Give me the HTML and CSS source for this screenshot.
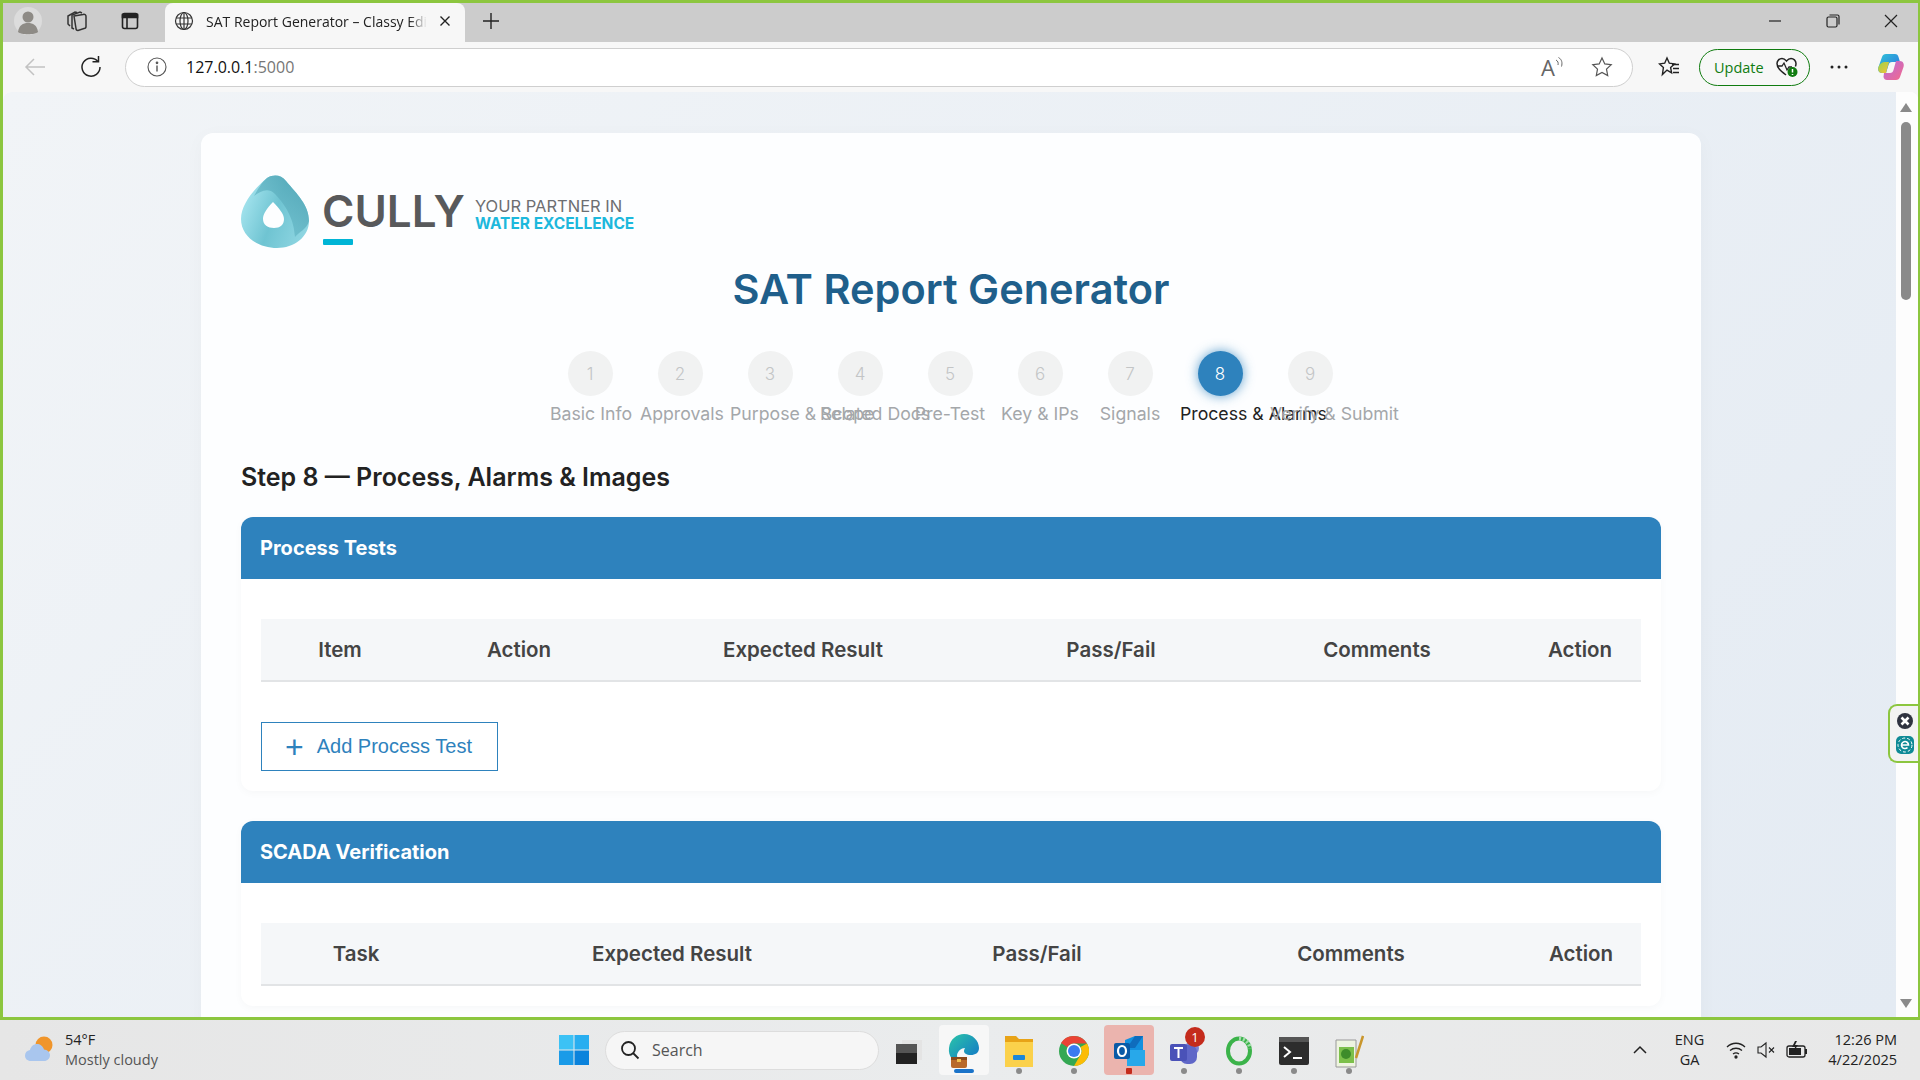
FILE: index.html
```html
<!DOCTYPE html>
<html lang="en">
<head>
  <meta charset="UTF-8">
  <title>SAT Report Generator – Classy Edition</title>
  <link rel="stylesheet" href="styles.css">
</head>
<body>
  <div class="window">
    <div class="tabstrip">
      <span class="strip-btn profile">
        <svg width="30" height="30" viewBox="0 0 30 30"><circle cx="15" cy="15" r="14" fill="#dcdcdc"/><circle cx="15" cy="11" r="5.5" fill="#8e8b86"/><path d="M5 26c1-7 5-9 10-9s9 2 10 9c-3 3-17 3-20 0z" fill="#8e8b86"/></svg>
      </span>
      <span class="strip-btn collections">
        <svg width="24" height="24" viewBox="0 0 24 24" fill="none" stroke="#333" stroke-width="1.5"><path d="M9 7l9-1.500a2 2 0 0 1 3 2v10a2 2 0 0 1-2 2l-6 2a2 2 0 0 1-2-2z"/><path d="M9 20l-2-1V6l8-3 2 1"/><path d="M5 17l-2-2V7l7-4 2 .5"/></svg>
      </span>
      <span class="strip-btn tabactions">
        <svg width="20" height="20" viewBox="0 0 20 20" fill="none" stroke="#222" stroke-width="1.6"><rect x="2.500" y="2.500" width="15" height="15" rx="2"/><path d="M2.500 3.500h15v3h-15z" fill="#222"/><path d="M7 6.500v11"/></svg>
      </span>
      <div class="tab">
        <svg width="20" height="20" viewBox="0 0 20 20" fill="none" stroke="#333" stroke-width="1.200"><circle cx="10" cy="10" r="8.500"/><ellipse cx="10" cy="10" rx="4" ry="8.500"/><path d="M2 7h16M2 13h16M10 1.500v17"/></svg>
        <span class="tab-title">SAT Report Generator – Classy Edition</span>
        <svg class="tab-close" width="12" height="12" viewBox="0 0 12 12" stroke="#222" stroke-width="1.400"><path d="M1.500 1.500l9 9M10.500 1.500l-9 9"/></svg>
      </div>
      <span class="strip-btn newtab">
        <svg width="18" height="18" viewBox="0 0 18 18" stroke="#222" stroke-width="1.400"><path d="M9 1v16M1 9h16"/></svg>
      </span>
      <div class="win-controls">
        <svg width="14" height="14" viewBox="0 0 14 14" stroke="#222" stroke-width="1.200"><path d="M1 7h12"/></svg>
        <svg width="14" height="14" viewBox="0 0 14 14" fill="none" stroke="#222" stroke-width="1.200"><rect x="1" y="3" width="10" height="10" rx="1.500"/><path d="M3.500 1h8a1.500 1.500 0 0 1 1.500 1.500v8"/></svg>
        <svg width="14" height="14" viewBox="0 0 14 14" stroke="#222" stroke-width="1.200"><path d="M1 1l12 12M13 1L1 13"/></svg>
      </div>
    </div>

    <div class="toolbar">
      <span class="tool-btn back">
        <svg width="22" height="20" viewBox="0 0 22 20" fill="none" stroke="#c2c2c2" stroke-width="1.500"><path d="M21 10H2M10 2l-8 8 8 8"/></svg>
      </span>
      <span class="tool-btn reload">
        <svg width="22" height="22" viewBox="0 0 22 22" fill="none" stroke="#222" stroke-width="1.500"><path d="M18 5.500A9 9 0 1 0 20 11"/><path d="M12.500 5.800h6V0"/></svg>
      </span>
      <div class="addressbar">
        <svg width="20" height="20" viewBox="0 0 20 20" fill="none" stroke="#555" stroke-width="1.100"><circle cx="10" cy="10" r="9"/><path d="M10 8.500v6" stroke-width="1.400"/><circle cx="10" cy="5.800" r=".8" fill="#555"/></svg>
        <span class="url">127.0.0.1<span class="url-port">:5000</span></span>
        <span class="readaloud">
          <span class="readaloud-a">A</span>
          <svg width="10" height="14" viewBox="0 0 10 14" fill="none" stroke="#666" stroke-width="1"><path d="M1 5c2 1 2.500 3 2 5M3.500 2.500c3.500 2 4 5.500 3 9"/></svg>
        </span>
        <svg class="addr-star" width="22" height="22" viewBox="0 0 22 22" fill="none" stroke="#555" stroke-width="1.200"><path d="M11 2l2.800 5.900 6.400.8-4.700 4.400 1.200 6.400-5.700-3.100-5.700 3.100 1.200-6.400L1.800 8.700l6.400-.8z"/></svg>
      </div>
      <span class="tool-btn favorites">
        <svg width="22" height="22" viewBox="0 0 22 22" fill="none" stroke="#222" stroke-width="1.400"><path d="M9 2l2.300 5.200 5.200.7-3.900 3.600 1 5.300-4.600-2.700-4.600 4.400 1-7-3.900-3.600 5.200-.7z"/><path d="M14 8.500h7M15 12.500h6M15 16.500h6"/></svg>
      </span>
      <div class="update-pill">
        <span>Update</span>
        <svg width="24" height="22" viewBox="0 0 24 22" fill="none"><path d="M11 19C6 15 2 12 2 7.500 2 4.500 4.500 2.500 7 2.500c2 0 3.200 1 4.500 2.500C12.800 3.500 14 2.500 16 2.500c2.500 0 5 2 5 5 0 1-.2 2-.6 3" stroke="#222" stroke-width="1.500"/><path d="M3 10h4l2 -3 3 7 2-3h3" stroke="#222" stroke-width="1.300"/><circle cx="17.500" cy="16" r="5" fill="#107c10"/><path d="M17.500 13v3.500M17.500 18v1" stroke="#fff" stroke-width="1.500"/></svg>
      </div>
      <span class="tool-btn more">
        <svg width="18" height="4" viewBox="0 0 18 4" fill="#222"><circle cx="2" cy="2" r="1.500"/><circle cx="9" cy="2" r="1.500"/><circle cx="16" cy="2" r="1.500"/></svg>
      </span>
      <span class="tool-btn copilot">
        <svg width="28" height="28" viewBox="0 0 28 28">
          <defs>
            <linearGradient id="cpA" x1="0" y1="0" x2="1" y2="1"><stop offset="0" stop-color="#2fc4d8"/><stop offset="1" stop-color="#2d6fe0"/></linearGradient>
            <linearGradient id="cpB" x1="0" y1="0" x2="1" y2="1"><stop offset="0" stop-color="#9bd24a"/><stop offset="1" stop-color="#f5c33b"/></linearGradient>
            <linearGradient id="cpC" x1="0" y1="0" x2="1" y2="1"><stop offset="0" stop-color="#b46be0"/><stop offset="1" stop-color="#f56a8a"/></linearGradient>
          </defs>
          <path d="M9 1h9c2 0 3 1 3.500 3L23 9h-8c-2 0-3 1-3.500 3L9 20H5c-3 0-4.500-3-3.500-6L5 4c.6-2 2-3 4-3z" fill="url(#cpA)"/>
          <path d="M1.500 14C3 10 6 9 8 9h4l-3 11H5c-3 0-4.500-3-3.500-6z" fill="url(#cpB)"/>
          <path d="M19 8h4c3 0 4.500 3 3.500 6L23 24c-.6 2-2 3-4 3h-9c-2 0-3-1-3.500-3L7 20h6c2 0 3-1 3.500-3z" fill="url(#cpC)"/>
        </svg>
      </span>
    </div>

    <div class="viewport">
      <div class="page">
        <main class="card">
          <div class="logo">
            <svg class="logo-drop" width="68" height="73" viewBox="0 0 68 73">
              <defs>
                <linearGradient id="dropA" x1="0" y1="0.300" x2="1" y2="0.700"><stop offset="0" stop-color="#a8e6f0"/><stop offset="0.500" stop-color="#6fc4d2"/><stop offset="1" stop-color="#8fd6e2"/></linearGradient>
                <linearGradient id="dropB" x1="1" y1="0" x2="0" y2="1"><stop offset="0" stop-color="#4a9fb0"/><stop offset="1" stop-color="#7ccbd8"/></linearGradient>
              </defs>
              <path fill="url(#dropA)" fill-rule="evenodd" d="M26 3C33 -1 40 0 45 6C56 19 68 30 68 46C68 62 53 73 36 73C18 73 0 62 0 44C0 29 14 13 26 3ZM32 27C26 33 22 39 22 44C22 50 27 53 33 53C39 53 43 50 43 44C43 39 38 33 32 27Z"/>
              <path fill="url(#dropB)" opacity="0.850" d="M26 3C33 -1 40 0 45 6C56 19 68 30 68 46C66 54 58 57 54 62C53 50 50 36 34 19C27 12 20 16 13 21C17 14 21 7 26 3Z"/>
            </svg>
            <div class="logo-name">
              <span class="logo-word">CULLY</span>
              <span class="logo-bar"></span>
            </div>
            <div class="logo-tag">
              <span>YOUR PARTNER IN</span>
              <strong>WATER EXCELLENCE</strong>
            </div>
          </div>

          <h1 class="page-title">SAT Report Generator</h1>

          <div class="stepper">
            <div class="step"><span class="step-num">1</span><span class="step-label">Basic Info</span></div>
            <div class="step"><span class="step-num">2</span><span class="step-label">Approvals</span></div>
            <div class="step"><span class="step-num">3</span><span class="step-label">Purpose &amp; Scope</span></div>
            <div class="step"><span class="step-num">4</span><span class="step-label">Related Docs</span></div>
            <div class="step"><span class="step-num">5</span><span class="step-label">Pre-Test</span></div>
            <div class="step"><span class="step-num">6</span><span class="step-label">Key &amp; IPs</span></div>
            <div class="step"><span class="step-num">7</span><span class="step-label">Signals</span></div>
            <div class="step active"><span class="step-num">8</span><span class="step-label">Process &amp; Alarms</span></div>
            <div class="step"><span class="step-num">9</span><span class="step-label">Verify &amp; Submit</span></div>
          </div>

          <h2 class="step-title">Step 8 — Process, Alarms &amp; Images</h2>

          <section class="panel">
            <h3 class="panel-head">Process Tests</h3>
            <div class="panel-body">
              <table class="data-table process-table">
                <thead>
                  <tr><th>Item</th><th>Action</th><th>Expected Result</th><th>Pass/Fail</th><th>Comments</th><th>Action</th></tr>
                </thead>
              </table>
              <button class="add-btn" type="button"><span class="add-plus">+</span>Add Process Test</button>
            </div>
          </section>

          <section class="panel">
            <h3 class="panel-head">SCADA Verification</h3>
            <div class="panel-body">
              <table class="data-table scada-table">
                <thead>
                  <tr><th>Task</th><th>Expected Result</th><th>Pass/Fail</th><th>Comments</th><th>Action</th></tr>
                </thead>
              </table>
            </div>
          </section>
        </main>
      </div>
      <div class="scrollbar">
        <span class="sb-up"></span>
        <span class="sb-thumb"></span>
        <span class="sb-down"></span>
      </div>
      <div class="side-float">
        <svg width="18" height="18" viewBox="0 0 18 18"><circle cx="9" cy="9" r="8" fill="#2f3340"/><path d="M5.500 5.500l7 7M12.500 5.500l-7 7" stroke="#fff" stroke-width="2.600"/></svg>
        <svg width="20" height="20" viewBox="0 0 20 20" fill="none"><rect x="1" y="1" width="18" height="18" rx="5" fill="#0f8a96"/><circle cx="10" cy="10" r="7" stroke="#fff" stroke-width="1" stroke-dasharray="3 2"/><path d="M6.500 10h7a3.500 3.500 0 1 0-1 2.500" stroke="#fff" stroke-width="1.600"/></svg>
      </div>
    </div>
  </div>

  <footer class="taskbar">
    <div class="weather">
      <svg width="34" height="32" viewBox="0 0 34 32"><circle cx="21" cy="11" r="8.500" fill="#f0952b"/><path d="M8 27c-4 0-6-2.500-6-5.500s2-5 5-5.500c1-4 4-6 7-6s6 2 7 5.500c3 .3 6 2.500 6 5.500 0 3.500-2.500 6-6 6z" fill="#a9c6ee"/></svg>
      <div class="weather-text">
        <span>54°F</span>
        <span class="weather-sub">Mostly cloudy</span>
      </div>
    </div>
    <div class="task-apps">
      <svg class="start" width="30" height="30" viewBox="0 0 30 30"><rect width="14.500" height="14.500" fill="#3cc2f5"/><rect x="15.500" width="14.500" height="14.500" fill="#28aef0"/><rect y="15.500" width="14.500" height="14.500" fill="#1a9be8"/><rect x="15.500" y="15.500" width="14.500" height="14.500" fill="#0b83dc"/></svg>
      <div class="task-search">
        <svg width="20" height="20" viewBox="0 0 20 20" fill="none" stroke="#222" stroke-width="1.800"><circle cx="8.500" cy="8.500" r="6.500"/><path d="M13 13l5.500 5.500"/></svg>
        <span>Search</span>
      </div>
      <span class="task-app">
        <svg width="26" height="26" viewBox="0 0 26 26"><rect x="6" y="2" width="20" height="20" fill="#e4e4e4"/><rect y="6" width="21" height="20" fill="#222"/><rect y="6" width="21" height="9" fill="#555"/></svg>
      </span>
      <span class="task-app edge">
        <svg width="32" height="36" viewBox="0 0 32 36">
          <defs><linearGradient id="edgeA" x1="0" y1="0" x2="1" y2="1"><stop offset="0" stop-color="#2bc6a8"/><stop offset="1" stop-color="#1171c9"/></linearGradient></defs>
          <path d="M1 15C2 6 9 1 16 1c9 0 15 7 15 14 0 5-4 7-8 7-5 0-7-2-7-4 0-1 .5-2 1-3-4 0-7 3-8 7 0 3 1 6 3 8C5 29 0 23 1 15z" fill="url(#edgeA)"/>
          <rect x="3" y="24" width="16" height="11" rx="2" fill="#b8692a"/><rect x="3" y="24" width="16" height="3" fill="#8a4a1c"/><rect x="9" y="26" width="4" height="3" fill="#f2c14e"/>
        </svg>
        <span class="task-mark wide"></span>
      </span>
      <span class="task-app">
        <svg width="30" height="34" viewBox="0 0 30 34"><path d="M1 2h11l3 3h14v5H1z" fill="#e8a317"/><rect x="1" y="8" width="28" height="25" fill="#fbd14b"/><rect x="9" y="21" width="12" height="5" rx="1" fill="#1b86d8"/></svg>
        <span class="task-mark"></span>
      </span>
      <span class="task-app">
        <svg width="30" height="30" viewBox="0 0 30 30"><circle cx="15" cy="15" r="15" fill="#34a853"/><path d="M15 0a15 15 0 0 1 13 7.500H15a7.500 7.500 0 0 0-6.500 3.800L2 7A15 15 0 0 1 15 0z" fill="#ea4335"/><path d="M28 7.500A15 15 0 0 1 15 30l6.500-11.300A7.500 7.500 0 0 0 21.500 11z" fill="#fbbc05"/><circle cx="15" cy="15" r="7.500" fill="#fff"/><circle cx="15" cy="15" r="6" fill="#3a7bf0"/></svg>
        <span class="task-mark"></span>
      </span>
      <span class="task-app outlook">
        <svg width="32" height="30" viewBox="0 0 32 30"><path d="M12 4L22 0h8v17H12z" fill="#1490df"/><path d="M14 14h18v16H14z" fill="#28a8ea"/><path d="M22 0h8l-8 12h-8z" fill="#0f6cbd"/><rect x="1" y="7" width="16" height="16" rx="2" fill="#0a5aa6"/><ellipse cx="9" cy="15" rx="4" ry="5" fill="none" stroke="#fff" stroke-width="2.200"/></svg>
        <span class="task-mark red"></span>
      </span>
      <span class="task-app">
        <svg width="32" height="32" viewBox="0 0 32 32"><circle cx="24" cy="13" r="7" fill="#7a82d6"/><rect x="12" y="10" width="17" height="19" rx="7" fill="#5f67c8"/><rect x="2" y="9" width="17" height="17" rx="2" fill="#4a52b8"/><path d="M6 13h9M10.500 13v10" stroke="#fff" stroke-width="2"/></svg>
        <span class="task-badge">1</span>
        <span class="task-mark"></span>
      </span>
      <span class="task-app">
        <svg width="28" height="30" viewBox="0 0 28 30" fill="none"><ellipse cx="14" cy="15" rx="11" ry="12.500" stroke="#3bb34a" stroke-width="4"/><path d="M14 2.500c6 0 11 5 11 10" stroke="#a6dcae" stroke-width="4" stroke-dasharray="2 2"/></svg>
        <span class="task-mark"></span>
      </span>
      <span class="task-app">
        <svg width="30" height="28" viewBox="0 0 30 28" fill="none"><rect width="30" height="28" rx="2" fill="#2d2d2d"/><rect width="30" height="5" fill="#555"/><path d="M5 10l6 5-6 5" stroke="#fff" stroke-width="2"/><path d="M14 21h9" stroke="#fff" stroke-width="2"/></svg>
        <span class="task-mark"></span>
      </span>
      <span class="task-app">
        <svg width="30" height="34" viewBox="0 0 30 34"><path d="M2 6h20v27H2z" fill="#eef4e0" stroke="#999" stroke-width="1"/><rect x="5" y="13" width="15" height="16" fill="#7cc04a"/><circle cx="12" cy="20" r="5" fill="#3e8c2a"/><path d="M22 24L29 2" stroke="#c9962c" stroke-width="2.500"/></svg>
        <span class="task-mark"></span>
      </span>
    </div>
    <div class="tray">
      <svg class="tray-chevron" width="14" height="10" viewBox="0 0 14 10" fill="none" stroke="#222" stroke-width="1.500"><path d="M1 8l6-6 6 6"/></svg>
      <div class="tray-lang"><span>ENG</span><span>GA</span></div>
      <svg width="20" height="18" viewBox="0 0 20 18" fill="none" stroke="#222" stroke-width="1.300"><path d="M1 6c5-5 13-5 18 0M4 9.500c3.500-3 8.500-3 12 0M7 13c2-1.500 4-1.500 6 0"/><circle cx="10" cy="16" r="1" fill="#222"/></svg>
      <svg width="20" height="18" viewBox="0 0 20 18" fill="none" stroke="#222" stroke-width="1.100"><path d="M2 6h3l5-4v14l-5-4H2z"/><path d="M13 6.500l5 5M18 6.500l-5 5"/></svg>
      <svg width="22" height="18" viewBox="0 0 22 18"><rect x="1" y="5" width="18" height="11" rx="2" fill="none" stroke="#222" stroke-width="1.300"/><rect x="3" y="7" width="12" height="7" fill="#222"/><rect x="19" y="8" width="2" height="5" fill="#222"/><path d="M9 0L6 6h3l-1 4 4-6H9l2-4z" fill="#222"/></svg>
      <div class="tray-clock"><span>12:26 PM</span><span>4/22/2025</span></div>
    </div>
  </footer>
</body>
</html>
```
FILE: styles.css
```css
* { margin: 0; padding: 0; box-sizing: border-box; }
html, body { width: 1920px; height: 1080px; overflow: hidden; }
body { font-family: "Inter", "Open Sans", sans-serif; background: #e8e8e8; display: flex; flex-direction: column; }

/* browser frame */
.window { height: 1020px; border: 3px solid #8cc63f; border-right-width: 2px; background: #f7f7f7; display: flex; flex-direction: column; position: relative; }
.tabstrip { height: 39px; background: #cccccc; display: flex; align-items: center; flex-shrink: 0; padding-bottom: 3px; }
.strip-btn { display: flex; align-items: center; justify-content: center; }
.profile { margin-left: 10px; width: 30px; }
.collections { margin-left: 22px; width: 24px; }
.tabactions { margin-left: 31px; width: 20px; }
.tab { margin-left: 25px; width: 300px; height: 39px; margin-bottom: -3px; background: #f7f7f7; border-radius: 8px 8px 0 0; display: flex; align-items: center; padding: 0 14px 3px 9px; gap: 12px; font: 14px "Open Sans", sans-serif; color: #222; }
.tab-title { flex: 1; white-space: nowrap; overflow: hidden; -webkit-mask-image: linear-gradient(90deg, #000 92%, transparent); mask-image: linear-gradient(90deg, #000 92%, transparent); }
.tab-close { flex-shrink: 0; }
.newtab { margin-left: 17px; }
.win-controls { margin-left: auto; display: flex; gap: 44px; padding-right: 20px; }

.toolbar { height: 50px; background: #f7f7f7; display: flex; align-items: center; flex-shrink: 0; position: relative; }
.tool-btn { display: flex; align-items: center; justify-content: center; }
.back { margin-left: 21px; width: 22px; }
.reload { margin-left: 34px; width: 22px; }
.addressbar { margin-left: 23px; width: 1508px; height: 39px; background: #fff; border: 1px solid #cfcfcf; border-radius: 20px; display: flex; align-items: center; padding: 0 19px 0 21px; }
.url { margin-left: 19px; font: 16px "Open Sans", sans-serif; color: #111; }
.url-port { color: #767676; }
.readaloud { margin-left: auto; display: flex; align-items: flex-start; color: #666; }
.readaloud-a { font: 22px "Open Sans", sans-serif; line-height: 24px; }
.addr-star { margin-left: 26px; }
.favorites { margin-left: 25px; width: 22px; }
.update-pill { margin-left: 19px; width: 111px; height: 37px; border: 1.500px solid #107c10; border-radius: 19px; display: flex; align-items: center; justify-content: space-between; padding: 0 10px 0 14px; font: 14.500px "Open Sans", sans-serif; color: #107c10; }
.more { margin-left: 20px; width: 18px; }
.copilot { margin-left: 29px; width: 28px; }

/* page viewport */
.viewport { flex: 1; min-height: 0; display: flex; position: relative; overflow: hidden; background: #fff; border-radius: 8px 8px 0 0; }
.page { flex: 1; min-width: 0; background: linear-gradient(135deg, #f1f4f7 0%, #e4ebf3 100%); padding: 41px 0 0 198px; overflow: hidden; }
.scrollbar { width: 22px; background: #fdfdfd; position: relative; flex-shrink: 0; }
.sb-up { position: absolute; top: 11px; left: 4px; border: 6px solid transparent; border-top: 0; border-bottom: 9px solid #8a8a8a; }
.sb-thumb { position: absolute; top: 30px; left: 5px; width: 10px; height: 178px; background: #8a8a8a; border-radius: 5px; }
.sb-down { position: absolute; bottom: 9px; left: 4px; border: 6px solid transparent; border-bottom: 0; border-top: 9px solid #8a8a8a; }
.side-float { position: absolute; right: -2px; top: 612px; width: 32px; height: 59px; background: #f3f3f3; border: 2px solid #8cc63f; border-right: 0; border-radius: 9px 0 0 9px; display: flex; flex-direction: column; align-items: center; justify-content: center; gap: 5px; }

.card { width: 1500px; background: #fdfeff; border-radius: 12px; padding: 42px 40px 40px; box-shadow: 0 4px 20px rgba(0,0,0,0.03); }

/* logo */
.logo { display: flex; align-items: flex-start; height: 73px; }
.logo-name { margin-left: 13px; margin-top: 17px; display: flex; flex-direction: column; }
.logo-word { font: 600 44px/38px "Inter", sans-serif; color: #58595b; }
.logo-bar { width: 30px; height: 6px; margin: 9px 0 0 1px; background: #00b5d6; border-radius: 1px; }
.logo-tag { margin-left: 10px; margin-top: 22px; display: flex; flex-direction: column; font: 16.500px/18px "Inter", sans-serif; color: #6d6e71; }
.logo-tag strong { color: #1db8dc; font-weight: 700; font-size: 15.500px; }

.page-title { margin-top: 11px; text-align: center; font-size: 41.500px; line-height: 60px; font-weight: 600; color: #1f5f8b; }

/* stepper */
.stepper { margin-top: 32px; display: flex; justify-content: center; padding-right: 2px; }
.step { width: 90px; padding: 0 5px; display: block; text-align: center; }
.step-num { width: 45px; height: 45px; margin: 0 auto 6px; border-radius: 50%; background: #f1f2f2; color: #c3c5c6; display: flex; align-items: center; justify-content: center; font-size: 17px; font-weight: 300; }
.step-label { display: block; font-size: 17.700px; line-height: 24px; color: #a4a7aa; white-space: nowrap; }
.step.active .step-num { background: #2e82bd; color: #fff; box-shadow: 0 0 12px rgba(46,130,189,0.75); }
.step.active .step-label { color: #222; }

.step-title { margin-top: 31px; font-size: 25px; line-height: 40px; font-weight: 600; color: #222; }

/* panels */
.panel { margin-top: 20px; background: #fff; border-radius: 12px; box-shadow: 0 2px 8px rgba(0,0,0,0.03); overflow: hidden; }
.panel + .panel { margin-top: 30px; }
.panel-head { height: 62px; background: #2e82bd; color: #fff; padding: 0 19px; display: flex; align-items: center; font-size: 20px; font-weight: 700; }
.panel-body { padding: 40px 20px 20px 20px; }
.data-table { width: 100%; border-collapse: collapse; table-layout: fixed; }
.data-table th { height: 62px; background: #f5f7f9; border-bottom: 2px solid #e2e4e6; font-size: 20.500px; font-weight: 600; color: #444; text-align: center; }
.process-table th:nth-child(1) { width: 158px; }
.process-table th:nth-child(2) { width: 200px; }
.process-table th:nth-child(3) { width: 368px; }
.process-table th:nth-child(4) { width: 248px; }
.process-table th:nth-child(5) { width: 284px; }
.scada-table th:nth-child(1) { width: 190px; }
.scada-table th:nth-child(2) { width: 442px; }
.scada-table th:nth-child(3) { width: 288px; }
.scada-table th:nth-child(4) { width: 340px; }
.add-btn { margin-top: 40px; width: 237px; height: 49px; background: #fff; border: 1.500px solid #2e82bd; color: #2e82bd; font: 20px "Liberation Sans", sans-serif; display: flex; align-items: center; padding-left: 23px; }
.add-plus { font-size: 32px; line-height: 28px; margin-right: 13px; font-weight: 400; }

/* taskbar */
.taskbar { height: 60px; flex: 1; background: linear-gradient(90deg, #e6e6e6, #eaeced 50%, #e8e8e8); display: flex; align-items: center; position: relative; font-family: "Open Sans", sans-serif; }
.weather { width: 559px; padding-left: 23px; display: flex; align-items: center; gap: 8px; font-size: 14.500px; color: #222; flex-shrink: 0; }
.weather-text { display: flex; flex-direction: column; line-height: 20px; }
.weather-sub { color: #555; }
.task-apps { display: flex; align-items: center; }
.start { flex-shrink: 0; }
.task-search { margin-left: 16px; width: 274px; height: 39px; background: #f6f6f6; border: 1px solid #ddd; border-radius: 20px; display: flex; align-items: center; gap: 12px; padding-left: 14px; font-size: 16px; color: #555; }
.task-app { width: 50px; height: 50px; margin-right: 5px; position: relative; display: flex; align-items: center; justify-content: center; border-radius: 4px; padding-top: 1px; }
.task-search + .task-app { margin-left: 5px; }
.edge { background: #f7f7f7; }
.outlook { background: #ebb4ae; }
.task-mark { position: absolute; bottom: 1px; left: 22px; width: 6px; height: 6px; border-radius: 50%; background: #8a8a8a; }
.task-mark.wide { left: 15px; width: 20px; height: 4px; bottom: 2px; border-radius: 2px; background: #1a73c9; }
.task-mark.red { background: #c42b1c; border-radius: 1px; }
.task-badge { position: absolute; top: 2px; right: 4px; width: 20px; height: 20px; border-radius: 50%; background: #c42b1c; color: #fff; font-size: 13px; line-height: 20px; text-align: center; }
.tray { margin-left: auto; display: flex; align-items: center; padding-right: 23px; gap: 10px; color: #222; font-size: 14.500px; }
.tray-chevron { margin-right: 18px; }
.tray-lang { display: flex; flex-direction: column; align-items: center; line-height: 20px; margin-right: 12px; }
.tray-clock { display: flex; flex-direction: column; align-items: flex-end; line-height: 20px; margin-left: 10px; }
```
